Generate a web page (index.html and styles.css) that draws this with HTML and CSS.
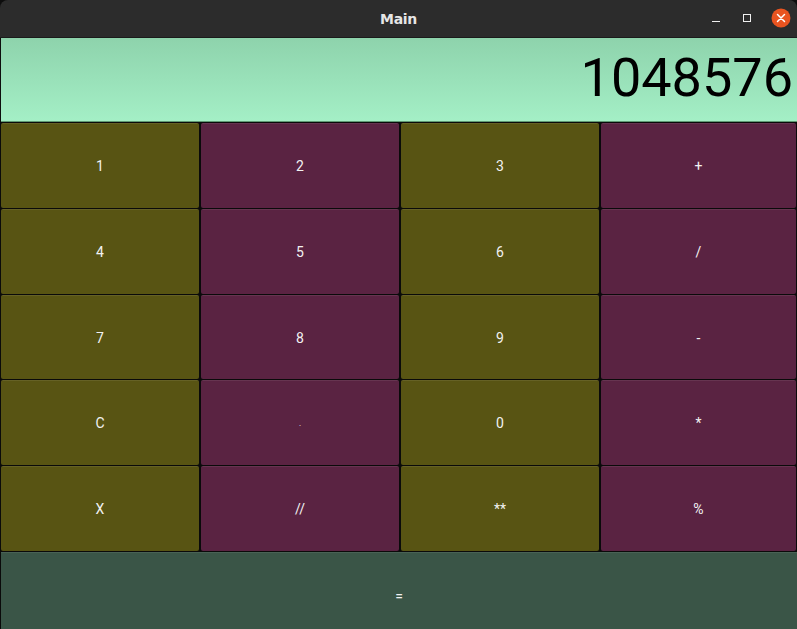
FILE: index.html
```html
<!DOCTYPE html>
<html>
<head>
<meta charset="utf-8">
<link rel="stylesheet" href="styles.css">
</head>
<body>
<div class="window">
  <header class="titlebar">
    <span class="title">Main</span>
    <div class="controls">
      <svg class="ctl" width="14" height="14" viewBox="0 0 14 14"><rect x="3" y="10" width="8" height="1" fill="#f0f0f0"/></svg>
      <svg class="ctl" width="14" height="14" viewBox="0 0 14 14"><rect x="3.5" y="3.5" width="7" height="7" fill="none" stroke="#f0f0f0" stroke-width="1"/></svg>
      <svg class="close" width="20" height="20" viewBox="0 0 20 20"><circle cx="10" cy="10" r="9.5" fill="#e95420"/><path d="M6.5 6.5 L13.5 13.5 M13.5 6.5 L6.5 13.5" stroke="#fff" stroke-width="1.5" stroke-linecap="round"/></svg>
    </div>
  </header>
  <div class="display"><span class="value">1048576</span></div>
  <div class="keys">
    <button class="key olive">1</button>
    <button class="key plum">2</button>
    <button class="key olive">3</button>
    <button class="key plum">+</button>
    <button class="key olive">4</button>
    <button class="key plum">5</button>
    <button class="key olive">6</button>
    <button class="key plum">/</button>
    <button class="key olive">7</button>
    <button class="key plum">8</button>
    <button class="key olive">9</button>
    <button class="key plum">-</button>
    <button class="key olive">C</button>
    <button class="key plum dot">.</button>
    <button class="key olive">0</button>
    <button class="key plum">*</button>
    <button class="key olive">X</button>
    <button class="key plum">//</button>
    <button class="key olive">**</button>
    <button class="key plum">%</button>
    <button class="key equals">=</button>
  </div>
</div>
</body>
</html>
```

FILE: styles.css
```css
html, body {
  margin: 0;
  padding: 0;
  background: #000;
}
.window {
  width: 797px;
  height: 629px;
  display: flex;
  flex-direction: column;
  overflow: hidden;
  background: #0d0d0d;
}
.titlebar {
  height: 37px;
  flex: 0 0 37px;
  background: #2c2c2c;
  border-bottom: 1px solid #1b1b1b;
  border-radius: 8px 8px 0 0;
  position: relative;
  display: flex;
  align-items: center;
  justify-content: center;
}
.title {
  font-family: "DejaVu Sans", "Open Sans", sans-serif;
  font-weight: bold;
  font-size: 14px;
  color: #e6e6e6;
  letter-spacing: -0.3px;
  margin-top: 0px;
}
.controls {
  position: absolute;
  right: 6px;
  top: 8px;
  display: flex;
  align-items: center;
  gap: 17px;
}
.ctl { display: block; }
.close { display: block; }
.display {
  height: 83px;
  flex: 0 0 83px;
  margin-left: 1px;
  background: linear-gradient(to bottom, #8ed3ac, #a4efc6);
  border-bottom: 1px solid #5e9a73;
  display: flex;
  align-items: center;
  justify-content: flex-end;
  padding-right: 4px;
}
.value {
  font-family: Roboto, "Liberation Sans", sans-serif;
  font-size: 54px;
  color: #000;
  line-height: 1;
  margin-top: -3px;
}
.keys {
  flex: 0 0 auto;
  display: grid;
  grid-template-columns: 200px 200px 200px 197px;
  grid-template-rows: 86px 86px 85px 86px 86px 86px;
  padding-top: 1px;
  background: #0a0a0a;
}
.key {
  margin: 0 1px 1px 1px;
  border: none;
  border-top: 1px solid rgba(255,255,255,0.08);
  border-radius: 2px;
  font-family: Roboto, "Liberation Sans", sans-serif;
  font-size: 14px;
  color: #f2f2f2;
  padding: 0;
}
.olive { background: #585413; }
.plum { background: #5a2342; }
.dot { font-size: 8px; }
.equals {
  grid-column: 1 / 5;
  background: #3a5547;
  margin: 0 0 0 1px;
  border-radius: 0;
}
```
